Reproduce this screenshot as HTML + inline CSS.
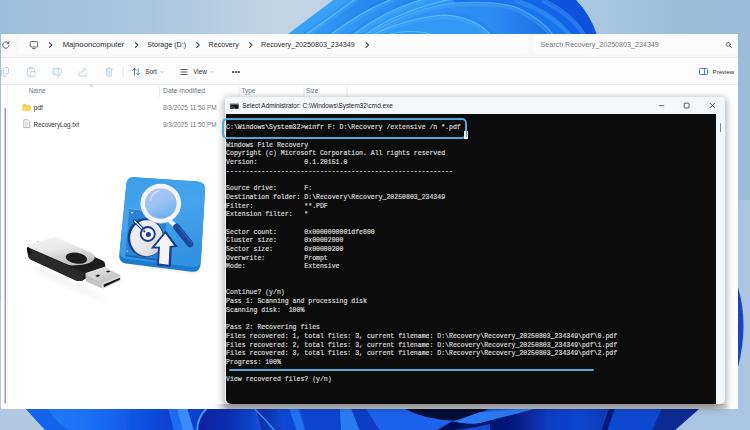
<!DOCTYPE html>
<html lang="en">
<head>
<meta charset="utf-8">
<title>Windows File Recovery</title>
<style>
html,body{margin:0;padding:0;}
body{width:750px;height:430px;overflow:hidden;position:relative;background:#b4cbe2;font-family:"Liberation Sans",sans-serif;}
#wall{position:absolute;left:0;top:0;width:750px;height:430px;}
#exp{position:absolute;left:0.900px;top:33.700px;width:737.400px;height:375.400px;background:#fff;overflow:hidden;}
#addr{position:absolute;left:0;top:0;width:738px;height:23.300px;background:#f8f8f8;border-bottom:1px solid #ebebeb;}
#addrbox{position:absolute;left:18px;top:3px;width:509px;height:17px;background:#fcfcfc;border-radius:3px;}
#srchbox{position:absolute;left:532px;top:3px;width:203px;height:17px;background:#fcfcfc;border-radius:3px;}
#tool{position:absolute;left:0;top:24px;width:737px;height:26px;background:#fdfdfd;border-bottom:1px solid #ececec;}
.t{position:absolute;white-space:nowrap;color:#2e2e2e;font-size:9px;line-height:12px;transform-origin:0 50%;}
.h{color:#6a7684;}
.d{color:#767676;}
#cmd{position:absolute;left:225px;top:97.300px;width:500px;height:307px;background:#f4f7fa;border-radius:4px 4px 5px 5px;box-shadow:0 2px 7px 2px rgba(0,0,0,.28);overflow:hidden;}
#con{position:absolute;left:1px;top:16.300px;width:490px;height:290.700px;background:#0c0c0c;border-radius:0 0 0 5px;}
#con pre{position:absolute;left:0.1px;top:10.800px;-webkit-text-stroke:0.22px #d0d0d0;margin:0;font-family:"Liberation Mono",monospace;font-size:6.5px;line-height:8.695px;color:#d0d0d0;letter-spacing:0.01px;}
</style>
</head>
<body>
<svg id="wall" viewBox="0 0 750 430">
<defs>
<linearGradient id="sky" x1="0" y1="0" x2="1" y2="0"><stop offset="0" stop-color="#9fbedb"/><stop offset="0.2" stop-color="#aac6df"/><stop offset="0.38" stop-color="#c2d5e6"/><stop offset="0.8" stop-color="#a8c6e0"/><stop offset="0.9" stop-color="#9dbdd9"/><stop offset="1" stop-color="#9bbbd8"/></linearGradient>
<linearGradient id="p1" x1="0" y1="0" x2="1" y2="1"><stop offset="0" stop-color="#40a8f8"/><stop offset="1" stop-color="#2f9af5"/></linearGradient>
<linearGradient id="p2" x1="0" y1="1" x2="1" y2="0"><stop offset="0" stop-color="#319cf5"/><stop offset="1" stop-color="#2286ef"/></linearGradient><linearGradient id="p2b" x1="0" y1="1" x2="1" y2="0"><stop offset="0" stop-color="#309bf5"/><stop offset="1" stop-color="#278cf1"/></linearGradient>
<linearGradient id="p3" x1="0" y1="0" x2="1" y2="0"><stop offset="0" stop-color="#3399f5"/><stop offset="0.65" stop-color="#2b8ef2"/><stop offset="1" stop-color="#1b6fe8"/></linearGradient>
<linearGradient id="bt" x1="0" y1="0" x2="1" y2="0">
<stop offset="0" stop-color="#1466ee"/><stop offset="0.05" stop-color="#2079f7"/><stop offset="0.11" stop-color="#186cf3"/><stop offset="0.16" stop-color="#1056e4"/><stop offset="0.21" stop-color="#0a42d2"/><stop offset="0.27" stop-color="#0b3ec8"/>
<stop offset="0.3" stop-color="#1a5fe6"/><stop offset="0.34" stop-color="#0a2a9e"/><stop offset="0.4" stop-color="#1654e0"/><stop offset="0.5" stop-color="#185ae6"/>
<stop offset="0.6" stop-color="#1c5fe8"/><stop offset="0.8" stop-color="#0a38b8"/><stop offset="0.9" stop-color="#0c44cc"/><stop offset="1" stop-color="#0f48cc"/></linearGradient>
<linearGradient id="nv" x1="0" y1="0" x2="1" y2="0"><stop offset="0" stop-color="#07209a"/><stop offset="0.5" stop-color="#0a2eb0"/><stop offset="1" stop-color="#1450d8"/></linearGradient>
<linearGradient id="dk" gradientUnits="userSpaceOnUse" x1="440" y1="0" x2="607" y2="0"><stop offset="0" stop-color="#040e50"/><stop offset="0.45" stop-color="#061a80"/><stop offset="0.65" stop-color="#0a3cc4"/><stop offset="0.85" stop-color="#0c46d0"/><stop offset="1" stop-color="#0a38b8"/></linearGradient>
<filter id="wb" x="-2%" y="-20%" width="104%" height="140%"><feGaussianBlur stdDeviation="0.5"/></filter>
</defs>
<rect width="750" height="430" fill="url(#sky)"/>
<rect x="0" y="300" width="60" height="130" fill="#b3c9e2"/><rect x="640" y="200" width="110" height="230" fill="#aac5e1"/>
<!-- top bloom -->
<g>
<path d="M287 35 L335 -1 L575 -1 Q590 14 597 35 Z" fill="#2e98f4"/>
<path d="M287 35 L335 -1 L356 -1 L305 35 Z" fill="url(#p1)"/>
<path d="M305 35 L356 -1 L392 -1 Q360 12 330 35 Z" fill="url(#p2)"/>
<path d="M330 35 Q360 12 392 -1 L424 -1 Q385 10 353 35 Z" fill="url(#p2b)"/>
<path d="M353 35 Q385 10 424 -1 L452 -1 Q400 10 365 35 Z" fill="#319cf5"/>
<path d="M365 35 Q410 8 455 3 Q500 0 520 9 Q545 22 553 35 Z" fill="url(#p3)"/>
<path d="M372 35 Q410 17 445 15 Q475 17 491 35 Z" fill="#319af5"/>
<path d="M452 -1 L517 -1 Q552 10 572 35 L553 35 Q545 22 520 9 Q500 0 455 3 Z" fill="#1a74f0"/>
<path d="M517 -1 L544 -1 Q575 14 586 35 L572 35 Q552 10 517 -1 Z" fill="#1464ea"/>
<path d="M544 -1 L575 -1 Q590 14 597 35 L586 35 Q575 14 544 -1 Z" fill="#0f52de"/>
<g fill="none" stroke="#58b4fb" stroke-width="3.500" opacity="0.28" filter="url(#wb)">
<path d="M306.500 36 L358 0"/><path d="M332 36 Q362 13 394 0"/><path d="M355 36 Q387 11 426 0"/>
<path d="M370 36.500 Q411 10 455 5 Q499 2 519 11 Q543 24 551 36"/>
<path d="M374 36 Q411 19 445 17 Q474 19 489 36"/>
<path d="M515 1 Q550 12 570 36"/><path d="M542 1 Q573 16 584 36"/>
</g>
<g fill="none" stroke="#0d4fd0" stroke-width="3" opacity="0.1" filter="url(#wb)">
<path d="M303.500 34 L354 -2"/><path d="M328 34 Q358 10 390 -2"/><path d="M351 34 Q383 8 422 -3"/>
<path d="M495 36 Q478 15 445 12.500"/>
</g>
<g fill="none" stroke="#5cc0fb" stroke-width="1.100" opacity="0.9">
<path d="M305 35 L356 -1"/><path d="M330 35 Q360 12 392 -1"/><path d="M353 35 Q385 10 424 -1"/><path d="M365 35 Q400 10 452 -1"/>
<path d="M368 35 Q410 8 455 3 Q500 0 520 9 Q545 22 553 35" stroke="#52b2fa"/>
<path d="M372 35 Q410 17 445 15 Q475 17 491 35"/>
<path d="M386 35 Q412 28 434 35" />
</g>
<g fill="none" stroke="#3d8ef2" stroke-width="0.800" opacity="0.8"><path d="M517 -1 Q552 10 572 35"/><path d="M544 -1 Q575 14 586 35"/></g>
</g>
<!-- bottom bloom -->
<g filter="url(#wb)">
<path d="M25 408 L700 408 L674 431 L46 431 Z" fill="url(#bt)"/>
<path d="M25 408 L47 408 Q55 422 70 431 L46 431 Z" fill="#1264ec"/>
<path d="M168 408 L187 408 L194 431 L174 431 Z" fill="#1f6cf2"/>
<path d="M177 408 L187 408 L194 431 L183 431 Z" fill="#3a8cfa"/>
<path d="M207 408 Q196 418 196 431 L262 431 L256 408 Z" fill="url(#nv)"/>
<path d="M207 408 Q197 418 197 431" fill="none" stroke="#4595fb" stroke-width="2"/>
<path d="M254 408 Q266 420 275 431" fill="none" stroke="#3f90f8" stroke-width="1.300"/>
<path d="M276 408 L289 408 L297 431 L287 431 Z" fill="#0e4ad6"/>
<path d="M289 408 L298 408 L305 431 L297 431 Z" fill="#2272f2"/>
<path d="M300 408 L340 408 L341 431 L306 431 Z" fill="#0c44d0"/>
<path d="M340 408 L351 408 L360 431 L341 431 Z" fill="#2a7af4"/>
<path d="M351 408 L366 408 L380 431 L360 431 Z" fill="#0b3cc4"/>
<path d="M366 408 L403 408 Q425 420 455 420.500 Q470 419 490 410 L537 408 L480 423 Q465 426 452 421 Q430 431 420 431 L380 431 Z" fill="#1c62ec"/>
<path d="M403 408 Q425 420 455 420.500 Q470 419 490 408 Z" fill="#040a34"/>
<path d="M452 421.500 Q470 426 490 420 L540 408 L607 408 L600 431 L436 431 Z" fill="url(#dk)"/>
<path d="M480 412 L537 408 L480 423 Q470 425 455 421 Z" fill="#2a7af4"/>
<path d="M436 431 Q462 431 490 424 L490 431 Z" fill="#154fd4"/>
<path d="M609 408 L662 408 L652 431 L601 431 Z" fill="#0e48d0"/>
<path d="M609 408 L615 408 L607 431 L601 431 Z" fill="#061c78"/>
<path d="M662 408 L700 408 L674 431 L652 431 Z" fill="#0a2a92"/>
</g>
<!-- right bulge -->
<path d="M738 287 Q749 325 738 367 Z" fill="#1a44c0"/>
</svg>

<div id="exp">
 <div id="addr"><div id="addrbox"></div><div id="srchbox"></div></div>
 <div id="tool"></div>
</div>

<div id="ov" style="position:absolute;left:0;top:0;width:750px;height:430px;"><svg id="ico" viewBox="0 0 750 430" style="position:absolute;left:0;top:0;width:750px;height:430px;">
<g fill="none" stroke="#3d3d3d" stroke-width="1.1" transform="translate(0.6 0)" stroke-linecap="round" stroke-linejoin="round"><path d="M48.8 42.7 L51.2 45 L48.8 47.3"/><path d="M134.8 42.7 L137.2 45 L134.8 47.3"/><path d="M196.10000000000002 42.7 L198.5 45 L196.10000000000002 47.3"/><path d="M249.0 42.7 L251.39999999999998 45 L249.0 47.3"/><path d="M365.5 42.7 L367.9 45 L365.5 47.3"/></g>
<!-- refresh -->
<g fill="none" stroke="#3d3d3d" stroke-width="0.8" stroke-linecap="round"><path d="M8.6 43.2 A3.2 3.2 0 1 0 9.1 45.6"/><path d="M8.9 41.6 L8.8 43.4 L7 43.3"/></g>
<!-- monitor -->
<g fill="none" stroke="#3d3d3d" stroke-width="0.8" stroke-linejoin="round"><rect x="30.2" y="41.6" width="7.4" height="5.4" rx="1"/><path d="M32.2 48.6 H35.6"/></g>
<!-- search -->
<g fill="none" stroke="#4a4a4a" stroke-width="0.8" stroke-linecap="round"><circle cx="728.4" cy="44.4" r="1.9"/><path d="M729.9 45.9 L731.6 47.6"/></g>
<!-- toolbar disabled icons -->
<g fill="none" stroke="#bcd2e4" stroke-width="0.9" stroke-linejoin="round" stroke-linecap="round">
<rect x="3.5" y="67.5" width="5" height="6.5" rx="1.2"/><path d="M1.5 70 V75 Q1.5 76 2.5 76 H6"/>
<rect x="27.5" y="68.200" width="7" height="8" rx="1.2"/><rect x="29.500" y="67.2" width="3" height="2" rx="0.6"/><rect x="30.500" y="71.5" width="4.5" height="5" rx="0.8" fill="#fdfdfd"/>
<rect x="52.8" y="68.8" width="8.400" height="6" rx="1.200"/><path d="M58.2 66.8 V77.2"/><path d="M54.6 71 V73.600"/>
<path d="M79 72 V75.200 Q79 76.200 80 76.200 H85.200 Q86.200 76.200 86.200 75.200 V73.500"/><path d="M81 73.200 Q81.500 69.800 85 69.600 M83.600 67.800 L85.600 69.600 L83.600 71.400"/>
<path d="M105.600 69 H112.400 M107.600 69 V67.800 H110.400 V69 M106.400 69 L106.900 76.200 H111.100 L111.600 69 M108.200 71 V74.400 M109.800 71 V74.400"/>
</g>
<path d="M123.400 66 V78" stroke="#e4e4e4" stroke-width="0.8"/>
<!-- sort -->
<g fill="none" stroke="#3d3d3d" stroke-width="0.8" stroke-linecap="round" stroke-linejoin="round"><path d="M134.400 75 V68.600 M132.600 70.400 L134.400 68.600 L136.200 70.400"/><path d="M138.200 68.600 V75 M136.400 73.200 L138.200 75 L140 73.200" stroke="#2f7fd0"/></g>
<path d="M160.800 71.400 L162 72.600 L163.200 71.400" fill="none" stroke="#8a8a8a" stroke-width="0.7"/>
<!-- view -->
<g stroke="#4a4a4a" stroke-width="0.9"><path d="M180.500 69.500 H187.500 M180.500 72 H187.500 M180.500 74.500 H187.500"/></g>
<path d="M210.600 71.400 L211.800 72.600 L213 71.400" fill="none" stroke="#8a8a8a" stroke-width="0.7"/>
<!-- preview -->
<g fill="none" stroke-width="0.9" stroke-linejoin="round"><rect x="699.500" y="68.500" width="8" height="6" rx="1" stroke="#3a6ea8"/><path d="M704.600 68.500 V74.500" stroke="#3a6ea8"/></g>
<!-- header separators -->
<g stroke="#e6e6e6" stroke-width="0.8"><path d="M159.500 86 V97 M239 86 V97 M304 86 V97 M347 86 V97"/></g>
<path d="M90 86.600 L91.600 85.200 L93.200 86.600" fill="none" stroke="#9a9a9a" stroke-width="0.7"/>
<!-- folder icon -->
<path d="M22.600 105.200 Q22.600 104.300 23.500 104.300 H25.800 L26.800 105.300 H30 Q30.900 105.300 30.900 106.200 V110 Q30.900 110.900 30 110.900 H23.500 Q22.600 110.900 22.600 110 Z" fill="#f5c542"/>
<path d="M22.600 106.600 H30.900 V110 Q30.900 110.900 30 110.900 H23.500 Q22.600 110.900 22.600 110 Z" fill="#fbd75b"/>
<!-- text file icon -->
<path d="M23.800 119.800 H28 L29.800 121.600 V127.600 H23.800 Z" fill="#fafafa" stroke="#9a9a9a" stroke-width="0.7"/>
<path d="M25 122.600 H28.600 M25 124 H28.600 M25 125.400 H28.600" stroke="#b5b5b5" stroke-width="0.5"/>
<!-- nav pane scrollbar -->
<path d="M7.200 84 V409" stroke="#ececec" stroke-width="0.8"/>
<path d="M5.200 108 V403" stroke="#7c7c84" stroke-width="1.100" stroke-linecap="round"/>
</svg>
<div class="t " style="left:62.7px;top:39.0px;font-size:7.7px;">Majnooncomputer</div>
<div class="t " style="left:147.2px;top:39.0px;font-size:7.15px;">Storage (D:)</div>
<div class="t " style="left:208.6px;top:39.0px;font-size:7.15px;">Recovery</div>
<div class="t " style="left:261px;top:39.0px;font-size:7.15px;">Recovery_20250803_234349</div>
<div class="t d" style="left:540.5px;top:39.0px;font-size:7.15px;">Search Recovery_20250803_234349</div>
<div class="t " style="left:145.3px;top:65.9px;font-size:6.3px;">Sort</div>
<div class="t " style="left:193.2px;top:65.9px;font-size:6.3px;">View</div>
<div class="t " style="left:231.800px;top:65.900px;font-size:7px;letter-spacing:0.400px;">•••</div>
<div class="t " style="left:712.6px;top:65.5px;font-size:6.1px;">Preview</div>
<div class="t h" style="left:28.7px;top:84.8px;font-size:6.3px;">Name</div>
<div class="t h" style="left:163px;top:84.8px;font-size:6.8px;">Date modified</div>
<div class="t h" style="left:241.5px;top:84.8px;font-size:6.3px;">Type</div>
<div class="t h" style="left:306px;top:84.8px;font-size:6.3px;">Size</div>
<div class="t " style="left:33.5px;top:102.100px;font-size:6.8px;">pdf</div>
<div class="t " style="left:33.5px;top:118.700px;font-size:6.3px;">RecoveryLog.txt</div>
<div class="t d" style="left:163px;top:102.100px;font-size:6.4px;">8/3/2025 11:50 PM</div>
<div class="t d" style="left:163px;top:118.700px;font-size:6.4px;">8/3/2025 11:50 PM</div>
</div>
<svg id="art" viewBox="0 0 750 430" style="position:absolute;left:0;top:0;width:750px;height:430px;">
<defs>
<linearGradient id="plate" x1="0" y1="0" x2="0.3" y2="1"><stop offset="0" stop-color="#3d9de8"/><stop offset="0.5" stop-color="#45a4ec"/><stop offset="1" stop-color="#3393e2"/></linearGradient>
<linearGradient id="lens" x1="0.2" y1="0" x2="0.7" y2="1"><stop offset="0" stop-color="#c0caf5"/><stop offset="0.5" stop-color="#a4c6f3"/><stop offset="1" stop-color="#6cb0ee"/></linearGradient>
<linearGradient id="disk" x1="0" y1="0" x2="1" y2="1"><stop offset="0" stop-color="#f4f5f7"/><stop offset="0.6" stop-color="#e4e6ea"/><stop offset="1" stop-color="#c9ccd4"/></linearGradient>
<linearGradient id="silver" x1="0" y1="0" x2="0.4" y2="1"><stop offset="0" stop-color="#f6f6f6"/><stop offset="0.5" stop-color="#e9e9e9"/><stop offset="1" stop-color="#c2c2c2"/></linearGradient>
<linearGradient id="conn" x1="0" y1="0" x2="1" y2="1"><stop offset="0" stop-color="#e9e9e9"/><stop offset="1" stop-color="#b9b9b9"/></linearGradient>
<filter id="soft" x="-20%" y="-20%" width="140%" height="140%"><feGaussianBlur stdDeviation="2.2"/></filter>
<filter id="soft1" x="-20%" y="-20%" width="140%" height="140%"><feGaussianBlur stdDeviation="0.45"/></filter>
</defs>
<!-- recovery icon -->
<path d="M130 181 L202 187 L198 272 L124 262 Z" fill="#9aa4b0" opacity="0.45" filter="url(#soft)"/>
<g filter="url(#soft1)">
<path d="M133.500 177.200 L197.500 181.400 Q205.400 182.200 205 190 L200.600 264 Q200 272.600 191.500 271.800 L126 263.600 Q118.600 262.400 119.300 255 L126.400 184 Q127.200 176.800 133.500 177.200 Z" fill="#1c7ccc"/>
<path d="M133.500 177.200 L197.500 181.400 Q205.400 182.200 205 190 L201 259.500 Q200.400 267.600 192 266.800 L126.600 258.800 Q119.200 257.600 119.800 250.500 L126.400 184 Q127.200 176.800 133.500 177.200 Z" fill="url(#plate)"/>
<!-- hdd body -->
<path d="M129.200 208.500 L166 212 L166 260 L125.600 254.500 Z" fill="#2b83d4"/>
<path d="M125.600 254.500 L166 260 L166 262 L125.400 256.600 Z" fill="#1d68b4"/>
<path d="M129.200 208.500 L176 214.600" stroke="#6db8f2" stroke-width="0.900"/><circle cx="132" cy="212.600" r="0.900" fill="#d9ecfb"/><circle cx="127.300" cy="251.200" r="0.900" fill="#e88a9a"/>
<!-- platter -->
<ellipse cx="145.600" cy="237.600" rx="18" ry="19.400" fill="#183c8c"/>
<ellipse cx="146.600" cy="238.200" rx="16.400" ry="18" fill="url(#disk)"/>
<!-- arm -->
<path d="M134.600 221 L147.400 233.600" stroke="#183c8c" stroke-width="3.300" stroke-linecap="round"/>
<path d="M134.800 221.200 L147.400 233.600" stroke="#f2f4f8" stroke-width="1.200" stroke-linecap="round"/>
<circle cx="147.800" cy="234" r="7" fill="#f4f5f8" stroke="#183c8c" stroke-width="1.900"/>
<circle cx="148.400" cy="234.600" r="2.500" fill="#1c3f96"/>
<circle cx="144.300" cy="231.300" r="1.100" fill="#1c3f96"/>
<!-- arrow -->
<path d="M165.600 230.400 L178 247 L171.800 247.600 L170.800 267 L157 265.400 L158 248.400 L150.800 248.600 Z" fill="#183c8c"/>
<path d="M165.200 233.600 L174.200 245.600 L169.600 246 L168.600 264.800 L159 263.600 L160 246.600 L154.800 246.800 Z" fill="#f3f4f7"/>
<!-- magnifier handle -->
<path d="M168.600 219.600 L176 226.600" stroke="#eef1f5" stroke-width="4.200" stroke-linecap="round"/>
<path d="M176.600 227.200 L190 243.800" stroke="#1d4a9c" stroke-width="6.800" stroke-linecap="round"/>
<path d="M178.400 226.600 L191.600 243" stroke="#2a5fb6" stroke-width="1.400" stroke-linecap="round"/>
<!-- magnifier -->
<ellipse cx="160.800" cy="203.500" rx="17" ry="16.400" fill="url(#lens)" opacity="0.9"/>
<path d="M150.600 200 Q152 192 159.600 190.800" stroke="#e8ebfc" stroke-width="1.300" fill="none" stroke-linecap="round" opacity="0.75"/>
<ellipse cx="160.800" cy="203.500" rx="18.100" ry="17.400" fill="none" stroke="#f3f5f8" stroke-width="4.500"/>
<path d="M141.600 209 Q146 222.600 160.600 223.300 Q173 222.600 178.600 212" stroke="#cfd5df" stroke-width="0.800" fill="none" opacity="0.8"/>
</g>
<!-- usb drive -->
<g filter="url(#soft1)">
<ellipse cx="70" cy="284" rx="42" ry="4" fill="#999" opacity="0.08" filter="url(#soft)" transform="rotate(24 70 284)"/>
<!-- black body -->
<path d="M28.400 246.400 Q26.600 247.200 26.800 249.400 L28 255.600 Q28.500 258.200 30.600 259.400 L76 280.400 Q79.400 281.800 82.600 280.400 L88 277 L86 273 L105.400 266.500 L105 263.600 Q104.600 261.600 102.400 260.600 L58 240 Z" fill="#1b1b1b"/>
<path d="M28 255.600 Q28.500 258.200 30.600 259.400 L76 280.400 Q79.400 281.800 82.600 280.400 L84 272.500 L30 249 Z" fill="#2a2a2a"/>
<path d="M27 248 L29 247.400 L31 253.400 L29.400 256 Z" fill="#0c0c0c"/>
<!-- connector -->
<path d="M85.300 273.500 L102.200 283.400 L102.800 288.800 L86 281.600 Z" fill="#c4c4c4"/>
<path d="M102.200 283.400 L120.800 275.800 L120.900 280.600 L102.800 288.800 Z" fill="#dedede"/>
<path d="M103.600 284.400 L119.800 277.800 L119.900 279.800 L103.900 287.200 Z" fill="#191919"/>
<path d="M85.300 273.500 L105.700 267 L120.800 275.800 L102.200 283.400 Z" fill="url(#conn)"/>
<path d="M95.300 275.700 L98.200 274.600 L100.300 275.800 L97.400 277 Z M105.800 271.400 L108.600 270.400 L110.600 271.500 L107.800 272.600 Z" fill="#1a1a1a"/>
<!-- silver cover -->
<path d="M29.400 244.600 L52.600 237.400 Q55 236.800 57.400 237.800 L90.500 252.600 Q96.600 255.800 93.800 259.800 Q90.400 263.800 82 264.800 L72 265.400 Q69.400 265.400 67 264.300 L29.600 248 Q26.800 246.200 29.400 244.600 Z" fill="url(#silver)"/>
<circle cx="37.600" cy="241.600" r="0.700" fill="#b5b5b5"/>
<ellipse cx="76.400" cy="258.200" rx="10.800" ry="5.400" fill="#1c1c1c" transform="rotate(9 76.400 258.200)"/>
</g>
</svg>
<div style="position:absolute;left:214px;top:404px;width:516px;height:5px;background:linear-gradient(90deg,rgba(196,196,196,0) 0,rgba(196,196,196,1) 14px,#c2c2c2 496px,#e0e0e0 512px,rgba(230,230,230,0) 516px);"></div>
<div id="cmd">
<div class="t" style="left:17.200px;top:2.600px;font-size:6.400px;color:#1c1c1c;">Select Administrator: C:\Windows\System32\cmd.exe</div>
 <svg viewBox="0 0 500 16" style="position:absolute;left:0;top:0.700px;width:500px;height:16px;">
  <rect x="5.2" y="5.2" width="8.400" height="5.600" fill="#111"/><rect x="5.200" y="5.200" width="8.400" height="1.200" fill="#d8d8d8"/><path d="M6.400 8 L7.600 8.800 L6.400 9.600 M8.200 9.800 H10" stroke="#ddd" stroke-width="0.500" fill="none"/>
  <g stroke="#333" stroke-width="0.800" fill="none"><path d="M434.200 7.600 H439.200"/><rect x="459.200" y="5.200" width="4.800" height="4.800" rx="0.600"/><path d="M484.800 5 L489.800 10 M489.800 5 L484.800 10"/></g>
 </svg>
 <div style="position:absolute;left:495.300px;top:26.200px;width:1.200px;height:8.500px;background:#8a8a8a;border-radius:1px;"></div>
 <div id="con"><pre>C:\Windows\System32&gt;winfr F: D:\Recovery /extensive /n *.pdf

Windows File Recovery
Copyright (c) Microsoft Corporation. All rights reserved
Version:            0.1.20151.0
----------------------------------------------------------

Source drive:       F:
Destination folder: D:\Recovery\Recovery_20250803_234349
Filter:             **.PDF
Extension filter:   *

Sector count:       0x0000000001dfe800
Cluster size:       0x00002000
Sector size:        0x00000200
Overwrite:          Prompt
Mode:               Extensive


Continue? (y/n)
Pass 1: Scanning and processing disk
Scanning disk:  100%

Pass 2: Recovering files
Files recovered: 1, total files: 3, current filename: D:\Recovery\Recovery_20250803_234349\pdf\0.pdf
Files recovered: 2, total files: 3, current filename: D:\Recovery\Recovery_20250803_234349\pdf\1.pdf
Files recovered: 3, total files: 3, current filename: D:\Recovery\Recovery_20250803_234349\pdf\2.pdf
Progress: 100%

View recovered files? (y/n)</pre></div>
</div>
<div id="hl" style="position:absolute;left:221.800px;top:117.500px;width:241.500px;height:17.800px;border:2px solid #4fa9d8;border-radius:5px;box-sizing:content-box;"></div>
<div style="position:absolute;left:464px;top:131.300px;width:4.300px;height:8px;background:#f4f4f4;"></div>
<div style="position:absolute;left:465.600px;top:131px;width:1.400px;height:6px;background:#4fa6d3;"></div>
<div style="position:absolute;left:229px;top:369.300px;width:365px;height:2px;background:#52addb;border-radius:1px;"></div>
</body>
</html>
